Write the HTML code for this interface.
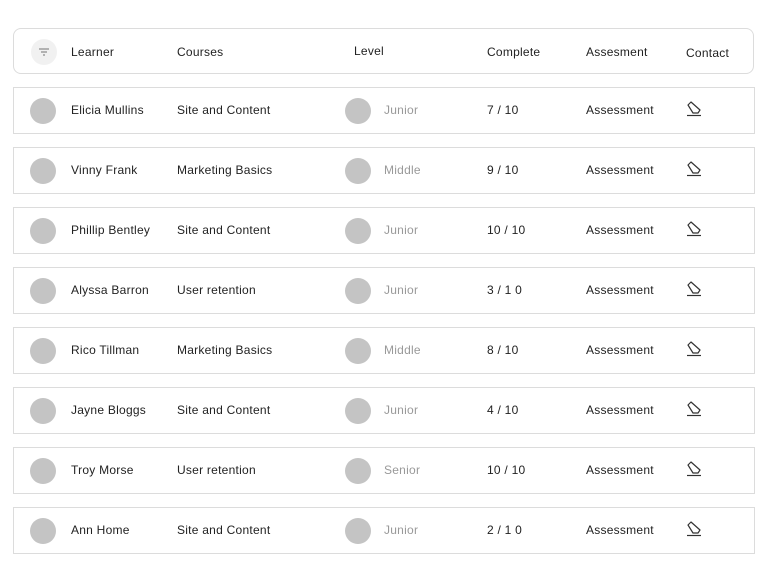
<!DOCTYPE html>
<html><head><meta charset="utf-8"><style>
body{margin:0;width:774px;height:580px;background:#fff;font-family:"Liberation Sans",sans-serif;font-size:12px;letter-spacing:0.25px;color:#222;position:relative;overflow:hidden}
.box{position:absolute;left:13px;width:742px;box-sizing:border-box;border:1px solid #dcdcdc}
.hdr{top:28px;height:46px;border-radius:8px;width:741px}
.row{height:47px}
.t{position:absolute;top:50%;transform:translateY(-50%);white-space:nowrap;margin-top:-0.5px}
.hdr .t{margin-top:1px}
.av{position:absolute;top:50%;margin-top:-13px;width:26px;height:26px;border-radius:50%;background:#c4c4c4}
.g{color:#999}
.f{position:absolute;left:17px;top:10px;width:26px;height:26px;border-radius:50%;background:#f1f1f1}
</style></head><body>
<div class="box hdr">
<div class="f"><svg width="26" height="26"><g stroke="#888" stroke-width="1.2"><line x1="8" y1="10" x2="18" y2="10"/><line x1="10" y1="13" x2="16" y2="13"/><line x1="12" y1="16" x2="14" y2="16"/></g></svg></div>
<span class="t" style="left:57px">Learner</span>
<span class="t" style="left:163px">Courses</span>
<span class="t" style="left:340px;margin-top:0px">Level</span>
<span class="t" style="left:473px">Complete</span>
<span class="t" style="left:572px">Assesment</span>
<span class="t" style="left:672px;margin-top:2px">Contact</span>
</div>
<div id="rows"></div>
<script>
var d=[["Elicia Mullins","Site and Content","Junior","7 / 10"],["Vinny Frank","Marketing Basics","Middle","9 / 10"],["Phillip Bentley","Site and Content","Junior","10 / 10"],["Alyssa Barron","User retention","Junior","3 / 1 0"],["Rico Tillman","Marketing Basics","Middle","8 / 10"],["Jayne Bloggs","Site and Content","Junior","4 / 10"],["Troy Morse","User retention","Senior","10 / 10"],["Ann Home","Site and Content","Junior","2 / 1 0"]];
var h="";d.forEach(function(r,i){h+='<div class="box row" style="top:'+(87+i*60)+'px"><div class="av" style="left:16px"></div><span class="t" style="left:57px">'+r[0]+'</span><span class="t" style="left:163px">'+r[1]+'</span><div class="av" style="left:331px"></div><span class="t g" style="left:370px">'+r[2]+'</span><span class="t" style="left:473px">'+r[3]+'</span><span class="t" style="left:572px">Assessment</span><svg style="position:absolute;left:671px;top:12px" width="18" height="18"><g fill="none" stroke="#333" stroke-width="1.2" stroke-linejoin="round"><path d="M3 5 L6 2 L15 10 L13 13 L8 13 Z"/><line x1="2" y1="15.5" x2="16" y2="15.5"/></g></svg></div>'});
document.getElementById("rows").innerHTML=h;
</script>
</body></html>
